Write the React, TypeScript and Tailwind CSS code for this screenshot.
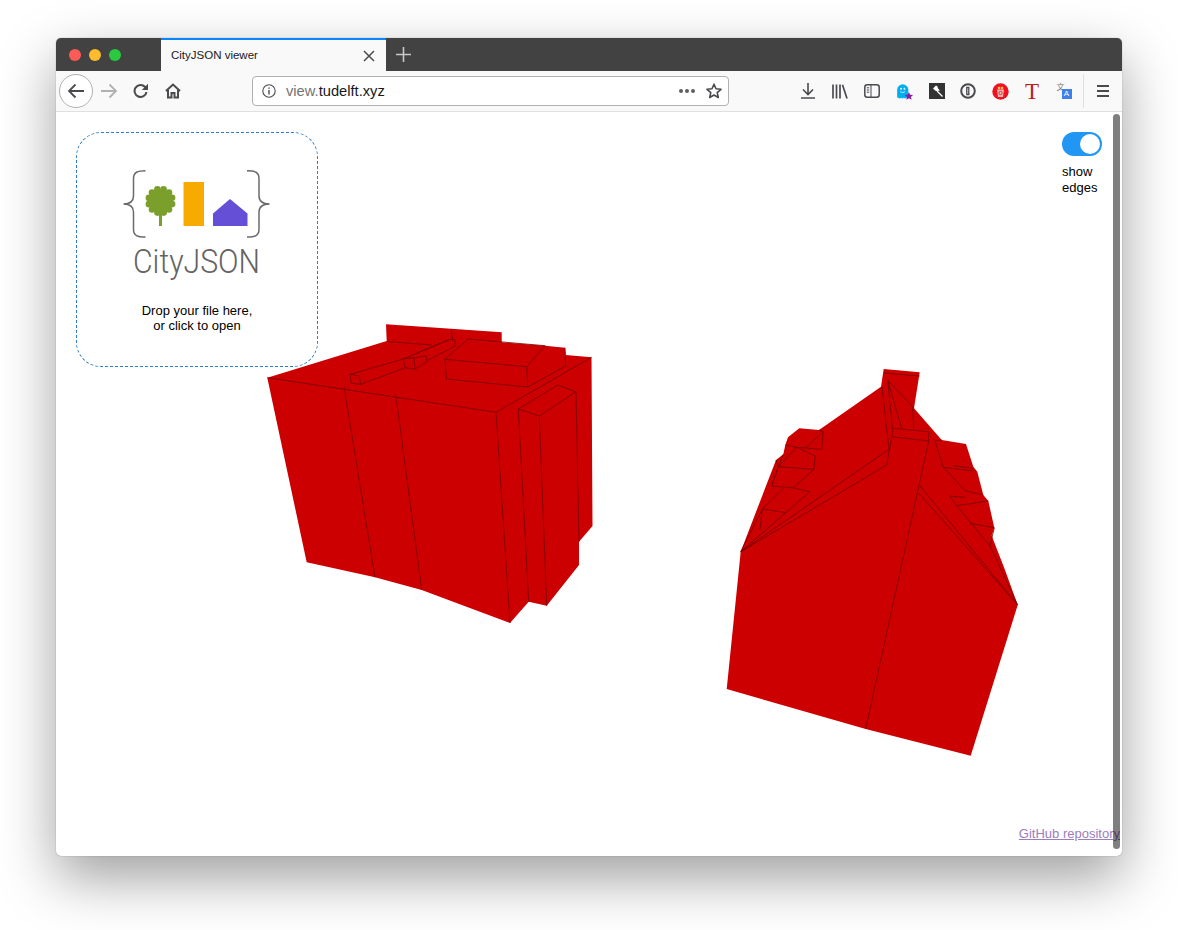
import React from 'react';

// edges of the two buildings, in page coordinates (viewBox is offset to match)
const buildingA =
  '267.3,377.7 386.7,341 386,324.3 501.7,332.3 501.7,342.3 545,345.7 565,347.7 565.7,355 591.500,357.3 592.5,526 579,541.7 579,565 546.7,605.7 528.7,601.7 510,623 421.7,590 375,577.3 306.7,562.3';

const edgesA = [
  '267.3,377.7 496,412.3 591.5,357.3',
  '496,412.3 510,623',
  '344,386.7 375,577.3',
  '395.7,394 421.7,590',
  '518.3,409 528.7,601.7',
  '518.3,409 539.3,416 546.7,605.7',
  '539.3,416 576,391.7 579,541.7',
  '518.3,409 557.7,385 576,391.7',
  '444.7,359.3 526.7,366.7 527.7,387 446.7,379 444.7,359.3 468.3,339 545,345.7 526.7,366.7',
  '527.7,387 565.7,366 565,347.7',
  '350,374.3 351.3,383.3 360.7,384.3 359.3,376 350,374.3 403.3,359 414,357.7 426,356 427,361.7 415,369 405,367.7 403.3,359',
  '414,357.7 415,369',
  '360.7,384.3 405,367.7',
  '416.7,353 450,339.3 455,340 455,346 427,360.7',
  '403.3,359 450,339.3',
  '451.3,329.3 452.7,340',
  '387.7,341.7 431.7,345',
];

const buildingB =
  '883.7,369 919.7,372.3 914,408.3 941.7,440 966,444 973.3,466.7 977.3,471.7 983.3,495 988.3,501 994.3,527.7 991.7,535.7 1005,570 1017.7,605 970.7,755.7 865.7,729 726.7,689 740.7,551.7 776,460 783.3,454.3 785.3,445 788,437.3 799.3,428.3 819,430 881,386.7';

const edgesB = [
  '884,373 919.5,376',
  '887.7,380 892.3,428.3',
  '887.7,380 901.7,428.5',
  '887.7,380 914,408.3',
  '882,386.7 889,449.3',
  '912.7,408.3 913.7,430',
  '893,428.3 928.7,431.7 928.7,441 891.7,436.7 893,428.3',
  '891.7,436.7 886.7,465 740.7,551.7',
  '889,449.3 740.7,551.7',
  '928.7,441 865.7,729',
  '919.3,485 1017.7,605',
  '918.3,492.7 1015,602',
  '990,546 1017.7,605',
  '935,440.7 941.7,440',
  '935,440.7 943.3,467.3 965,490.7 983.3,495',
  '953.3,465.7 973.3,468.3',
  '943.3,467.3 973.3,471',
  '949.3,496 965,497.3',
  '949.3,496 956.7,505.7 988.3,501',
  '956.7,505.7 990,546 994.3,527.7',
  '970,523.3 994.3,527.7',
  '819,430 823.3,431.7 821.7,449.3 796.7,447.3 785.3,445',
  '823.3,431.7 805,448.3',
  '796.7,447.3 778.3,466.7 814,469.3 815,456 796.7,447.3',
  '814,469.3 794,487.3',
  '778.3,466.7 771.7,486 794,488 810,491.7 785.7,512.7 762.3,509 783.3,488.3',
  '762.3,509 760,530',
  '776,460 778.3,466.7 783.3,454.3',
  '740.7,551.7 785.7,512.7',
  '740.7,551.7 762.3,509',
  '771.7,486 778.3,466.7',
];

const iconStroke = '#4a4a4f';

function Edges({ lines }: { lines: string[] }) {
  return (
    <>
      {lines.map((pts, i) => (
        <polyline key={i} points={pts} fill="none" stroke="#750000" strokeWidth="0.8" />
      ))}
    </>
  );
}

function TabBar() {
  return (
    <div className="flex h-[33px] bg-[#424242]">
      <div className="flex w-[105px] items-center gap-2 pl-[13px]">
        <span className="h-3 w-3 rounded-full bg-[#fc5b57]" />
        <span className="h-3 w-3 rounded-full bg-[#fdbc2e]" />
        <span className="h-3 w-3 rounded-full bg-[#2ac93f]" />
      </div>
      <div className="flex w-[225px] items-center justify-between border-t-2 border-[#0a84ff] bg-[#f9f9fa] pl-[10px] pr-[11px] text-[11.5px] text-[#18181a]">
        <span>CityJSON viewer</span>
        <svg width="12" height="12" viewBox="0 0 12 12">
          <path d="M1 1 11 11M11 1 1 11" stroke={iconStroke} strokeWidth="1.5" />
        </svg>
      </div>
      <div className="flex w-[34px] items-center justify-center">
        <svg width="15" height="15" viewBox="0 0 15 15">
          <path d="M7.5 0v15M0 7.5h15" stroke="#c8c8c8" strokeWidth="1.6" />
        </svg>
      </div>
    </div>
  );
}

function ToolButton({ children, w = 32 }: { children: React.ReactNode; w?: number }) {
  return (
    <div className="flex h-full shrink-0 items-center justify-center" style={{ width: w }}>
      {children}
    </div>
  );
}

function Toolbar() {
  return (
    <div className="flex h-[41px] items-center border-b border-[#e0e0e1] bg-[#f9f9fa]">
      {/* back / forward / reload / home */}
      <div className="ml-[3px] flex h-[34px] w-[34px] shrink-0 items-center justify-center rounded-full border border-[#b1b1b3] bg-white">
        <svg width="18" height="16" viewBox="0 0 18 16" fill="none" stroke={iconStroke} strokeWidth="1.8">
          <path d="M17 8H2M8.5 1.5 2 8l6.5 6.5" />
        </svg>
      </div>
      <div className="ml-[7px] flex w-[18px] shrink-0 justify-center">
        <svg width="18" height="16" viewBox="0 0 18 16" fill="none" stroke="#b1b1b3" strokeWidth="1.8">
          <path d="M1 8h15M9.5 1.5 16 8l-6.5 6.5" />
        </svg>
      </div>
      <div className="ml-[15px] flex w-[16px] shrink-0 justify-center">
        <svg width="16" height="16" viewBox="0 0 16 16" fill="none" stroke={iconStroke} strokeWidth="2">
          <path d="M13.5 9a6 6 0 1 1-1.6-5.2L14 6" />
          <path d="M15 .8V7H8.8z" fill={iconStroke} stroke="none" />
        </svg>
      </div>
      <div className="ml-[16px] flex w-[16px] shrink-0 justify-center">
        <svg width="16" height="16" viewBox="0 0 16 16" fill="none" stroke={iconStroke} strokeWidth="2">
          <path d="M1 8 8 1.500 15 8M3 7v7.500h3.500V10h3v4.500H13V7" />
        </svg>
      </div>

      {/* url bar */}
      <div className="ml-[71px] flex h-[30px] w-[477px] shrink-0 items-center rounded-[4px] border border-[#b1b1b3] bg-white pl-[9px] pr-[6px]">
        <svg width="14" height="14" viewBox="0 0 14 14" fill="none" stroke={iconStroke}>
          <circle cx="7" cy="7" r="6.2" strokeWidth="1.1" />
          <path d="M7 6v4.5M7 3.4v1.4" strokeWidth="1.4" />
        </svg>
        <span className="ml-[10px] text-[14.7px] text-[#737373]">
          view.<span className="text-[#18181a]">tudelft.xyz</span>
        </span>
        <div className="ml-auto flex items-center gap-[2px]">
          <span className="h-[4px] w-[4px] rounded-full bg-[#5f5f63]" />
          <span className="h-[4px] w-[4px] rounded-full bg-[#5f5f63]" />
          <span className="h-[4px] w-[4px] rounded-full bg-[#5f5f63]" />
        </div>
        <svg className="ml-[11px]" width="16" height="16" viewBox="0 0 16 16" fill="none" stroke={iconStroke} strokeWidth="1.6">
          <path d="M8 1.2 10 5.8l5 .5-3.800 3.300 1.100 4.900L8 12l-4.300 2.500 1.100-4.900L1 6.300l5-.5z" strokeLinejoin="round" />
        </svg>
      </div>

      {/* extensions */}
      <div className="ml-[63px] flex h-full items-center">
        <ToolButton>
          <svg width="14" height="16" viewBox="0 0 14 16" fill="none" stroke={iconStroke} strokeWidth="1.6">
            <path d="M7 0v11M2 6.500 7 11.500 12 6.500M0 15h14" />
          </svg>
        </ToolButton>
        <ToolButton>
          <svg width="16" height="15" viewBox="0 0 16 15" fill="none" stroke={iconStroke} strokeWidth="1.7">
            <path d="M1 .5v14M4.500 .5v14M8 .5v14M10.500 .8 15 14.500" />
          </svg>
        </ToolButton>
        <ToolButton>
          <svg width="16" height="14" viewBox="0 0 16 14" fill="none" stroke={iconStroke} strokeWidth="1.5">
            <rect x=".8" y=".8" width="14.400" height="12.400" rx="2.500" />
            <path d="M7 .8v12.400M2.800 3.800h2.400M2.800 6h2.400M2.800 8.200h2.400" strokeWidth="1" />
          </svg>
        </ToolButton>
        <ToolButton w={33}>
          <svg width="18" height="18" viewBox="0 0 16 16">
            <path d="M1 7a5 5 0 0 1 10 0v6.500c0 1-1 1.200-1.700.5-.7.800-1.600.8-2.300 0-.7.800-1.600.8-2.300 0-.7.700-1.700.800-2.500 0C1.400 14 1 13.800 1 13z" fill="#00aef0" />
            <circle cx="4.500" cy="6" r=".8" fill="#fff" />
            <circle cx="7.500" cy="6" r=".8" fill="#fff" />
            <path d="M3.800 8.500c1 1 3 1 4.200 0" stroke="#fff" strokeWidth=".7" fill="none" />
            <path d="m11.500 9 1.100 2.400 2.600.2-2 1.700.7 2.500-2.400-1.400-2.300 1.400.6-2.500-1.900-1.700 2.500-.2z" fill="#8c1d9f" />
          </svg>
        </ToolButton>
        <ToolButton w={31}>
          <svg width="16" height="16" viewBox="0 0 16 16">
            <rect width="16" height="16" fill="#333" />
            <path d="M4 5.500 7 2.500l1.500 1 .5 2L11 7.500 8 8l.5-.1L7 8 5 6.500z" fill="#fff" />
            <path d="m8 8 5.500 5.500" stroke="#fff" strokeWidth="1.200" />
          </svg>
        </ToolButton>
        <ToolButton>
          <svg width="16" height="16" viewBox="0 0 16 16" fill="none">
            <circle cx="8" cy="8" r="6.800" stroke={iconStroke} strokeWidth="2" />
            <path d="M6.800 4.500h2v7h-2zM6 8h1M8 11h1.500" stroke={iconStroke} strokeWidth="1.300" />
          </svg>
        </ToolButton>
        <ToolButton>
          <svg width="17" height="17" viewBox="0 0 17 17">
            <circle cx="8.500" cy="8.500" r="8.200" fill="#f01020" />
            <path d="M5 6.500h7l-1 7.500H6z" fill="#f4b6b0" />
            <circle cx="7" cy="5" r="1.300" fill="#f2c24e" />
            <circle cx="10" cy="5" r="1.300" fill="#f2c24e" />
            <circle cx="8.500" cy="10" r="1.700" fill="none" stroke="#b03b40" strokeWidth=".9" />
          </svg>
        </ToolButton>
        <ToolButton>
          <span className="font-['Liberation_Serif',serif] text-[23px] leading-none text-[#b8201a]">T</span>
        </ToolButton>
        <ToolButton>
          <div className="relative h-4 w-[15px]">
            <span className="absolute left-0 top-0 font-['Noto_Sans_CJK_SC',sans-serif] text-[8px] leading-none text-[#777]">文</span>
            <span className="absolute bottom-0 right-0 flex h-[10px] w-[10px] items-center justify-center bg-[#3f7fe8] text-[8px] leading-none text-white">A</span>
          </div>
        </ToolButton>
      </div>
      <div className="ml-[3px] h-[34px] w-px shrink-0 bg-[#e0e0e1]" />
      <div className="ml-[13px] flex shrink-0 flex-col gap-[3px]">
        <span className="h-[2px] w-3 bg-[#4a4a4f]" />
        <span className="h-[2px] w-3 bg-[#4a4a4f]" />
        <span className="h-[2px] w-3 bg-[#4a4a4f]" />
      </div>
    </div>
  );
}

function Logo() {
  return (
    <svg width="155" height="115" viewBox="120 165 155 115" fill="none">
      <path d="M145.500 170.700c-8 0-12 1.500-12 8v17c0 6-4 8.300-10 8.300 6 0 10 2.300 10 8.300v17c0 6.500 4 7.700 12 7.700" stroke="#6b6969" strokeWidth="1.500" />
      <path d="M247 170.700c8 0 12 1.500 12 8v17c0 6 4 8.300 10.500 8.300-6.500 0-10.500 2.300-10.500 8.300v17c0 6.500-4 7.700-12 7.700" stroke="#6b6969" strokeWidth="1.500" />
      {/* tree */}
      <rect x="159" y="208" width="3" height="18" fill="#7b9f2b" />
      <circle cx="160.500" cy="201" r="11.500" fill="#7b9f2b" />
      {Array.from({ length: 12 }).map((_, i) => (
        <circle
          key={i}
          cx={160.500 + 12 * Math.cos((i * Math.PI) / 6 + 0.26)}
          cy={201 + 12 * Math.sin((i * Math.PI) / 6 + 0.26)}
          r="3.300"
          fill="#7b9f2b"
        />
      ))}
      <rect x="183.500" y="182" width="20.500" height="44" fill="#f7ab00" />
      <path d="M213 226v-12.500l17-14.500 17.500 14.500V226z" fill="#654fd6" />
      <text
        x="133"
        y="272.700"
        fontSize="33"
        fontWeight="300"
        fontFamily="Roboto, sans-serif"
        fill="#656363"
        textLength="127"
        lengthAdjust="spacingAndGlyphs"
      >
        CityJSON
      </text>
    </svg>
  );
}

function App() {
  return (
    <div className="h-[930px] overflow-hidden bg-white pl-[56px] pt-[38px] font-['Liberation_Sans',Arial,sans-serif]">
      <div className="flex h-[818px] w-[1066px] flex-col overflow-hidden rounded-[5px] bg-white shadow-[0_22px_56px_rgba(0,0,0,0.38),0_0_1px_rgba(0,0,0,0.5)]">
        <TabBar />
        <Toolbar />
        <main className="relative flex flex-1 flex-col">
          <div className="flex items-start justify-between pl-[20px] pr-[20px] pt-[20px]">
            <div className="flex h-[235px] w-[242px] flex-col items-center rounded-[25px] border border-dashed border-[#2b7fc4] pt-[32px] text-[13px] leading-[15px] text-black">
              <Logo />
              <p className="mt-[23px] text-center">
                Drop your file here,
                <br />
                or click to open
              </p>
            </div>
            <div className="w-[40px]">
              <div className="flex h-6 w-10 items-center justify-end rounded-full bg-[#2196f3] pr-[2px]">
                <span className="h-5 w-5 rounded-full bg-white" />
              </div>
              <p className="mt-2 text-[13px] leading-[16px] text-black">show edges</p>
            </div>
          </div>

          <a className="mb-[15px] mr-[2px] mt-auto self-end text-[13px] leading-[15px] text-[#9b7dbd] underline">
            GitHub repository
          </a>

          {/* model view */}
          <svg className="absolute inset-0 z-10" width="1066" height="744" viewBox="56 112 1066 744">
            <polygon points={buildingA} fill="#cc0000" />
            <Edges lines={edgesA} />
            <polygon points={buildingB} fill="#cc0000" />
            <Edges lines={edgesB} />
          </svg>

          {/* overlay scrollbar */}
          <div className="absolute bottom-[7px] right-[2px] top-[2px] z-20 w-[7px] rounded-full bg-black/50" />
        </main>
      </div>
    </div>
  );
}

export default App;
